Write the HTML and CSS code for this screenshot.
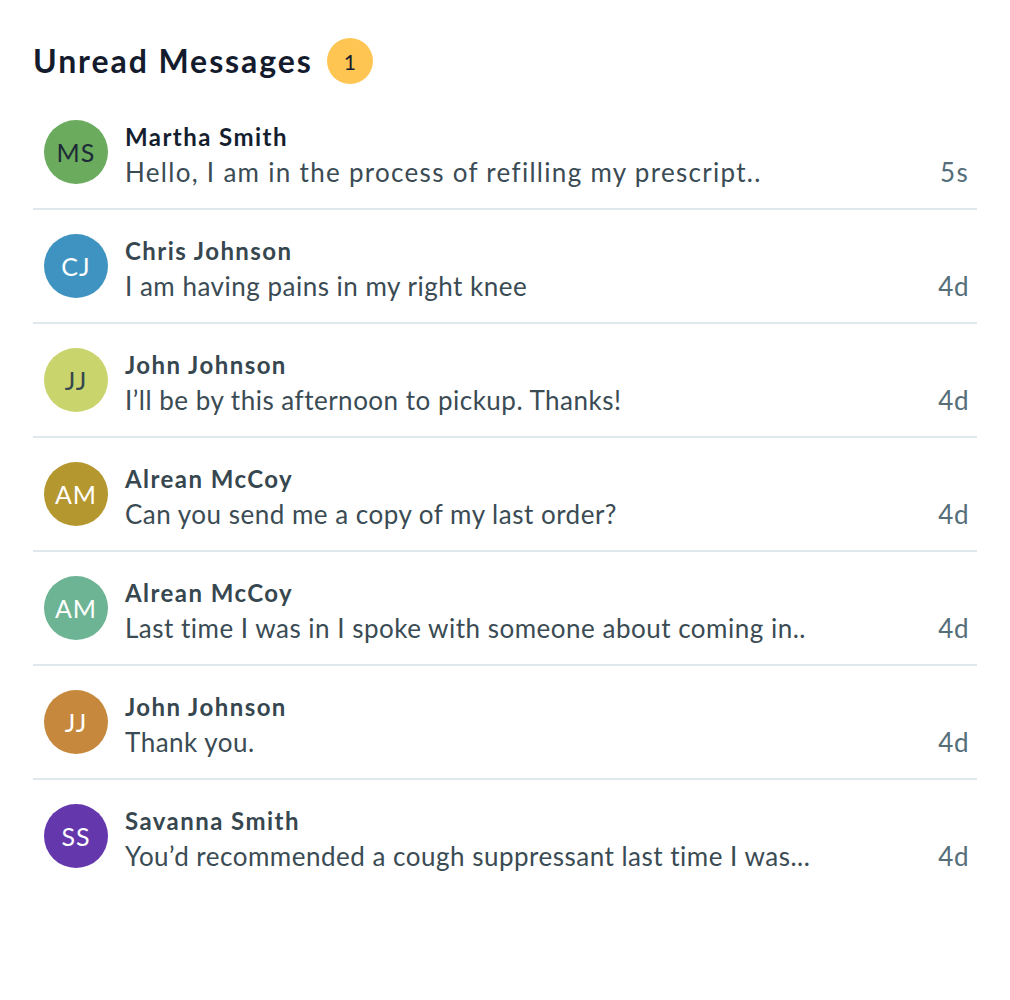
FILE: index.html
```html
<!DOCTYPE html>
<html>
<head>
<meta charset="utf-8">
<link rel="stylesheet" href="styles.css">
</head>
<body>
<div class="panel">
  <div class="header">
    <h1 class="title">Unread Messages</h1>
    <span class="badge">1</span>
  </div>
  <ul class="list">
    <li class="row unread">
      <div class="avatar av-green dark-text">MS</div>
      <div class="body">
        <div class="name">Martha Smith</div>
        <div class="line"><span class="msg">Hello, I am in the process of refilling my prescript..</span><span class="time">5s</span></div>
      </div>
    </li>
    <li class="row">
      <div class="avatar av-blue">CJ</div>
      <div class="body">
        <div class="name">Chris Johnson</div>
        <div class="line"><span class="msg">I am having pains in my right knee</span><span class="time">4d</span></div>
      </div>
    </li>
    <li class="row">
      <div class="avatar av-lime">JJ</div>
      <div class="body">
        <div class="name">John Johnson</div>
        <div class="line"><span class="msg">I’ll be by this afternoon to pickup. Thanks!</span><span class="time">4d</span></div>
      </div>
    </li>
    <li class="row">
      <div class="avatar av-olive">AM</div>
      <div class="body">
        <div class="name">Alrean McCoy</div>
        <div class="line"><span class="msg">Can you send me a copy of my last order?</span><span class="time">4d</span></div>
      </div>
    </li>
    <li class="row">
      <div class="avatar av-teal">AM</div>
      <div class="body">
        <div class="name">Alrean McCoy</div>
        <div class="line"><span class="msg">Last time I was in I spoke with someone about coming in..</span><span class="time">4d</span></div>
      </div>
    </li>
    <li class="row">
      <div class="avatar av-orange">JJ</div>
      <div class="body">
        <div class="name">John Johnson</div>
        <div class="line"><span class="msg">Thank you.</span><span class="time">4d</span></div>
      </div>
    </li>
    <li class="row last">
      <div class="avatar av-purple">SS</div>
      <div class="body">
        <div class="name">Savanna Smith</div>
        <div class="line"><span class="msg">You’d recommended a cough suppressant last time I was...</span><span class="time">4d</span></div>
      </div>
    </li>
  </ul>
</div>
</body>
</html>
```
FILE: styles.css
```css
html, body {
  margin: 0;
  padding: 0;
  background: #ffffff;
}
body {
  font-family: Lato, "Open Sans", "Liberation Sans", sans-serif;
}
.panel {
  padding: 38px 33px 0 33px;
}
.header {
  display: flex;
  align-items: center;
  height: 46px;
  gap: 14px;
}
.title {
  margin: 0;
  font-size: 32px;
  font-weight: 700;
  letter-spacing: 0.06em;
  color: #141b2d;
  line-height: 46px;
}
.badge {
  width: 46px;
  height: 46px;
  border-radius: 50%;
  background: #fec552;
  color: #141b2d;
  font-size: 21px;
  display: flex;
  align-items: center;
  justify-content: center;
}
.list {
  list-style: none;
  margin: 12px 0 0 0;
  padding: 0;
}
.row {
  display: flex;
  align-items: flex-start;
  gap: 17px;
  padding: 24px 8px 24px 11px;
  border-bottom: 2px solid #dfe8ec;
}
.row.last {
  border-bottom: none;
}
.avatar {
  flex: none;
  width: 64px;
  height: 64px;
  border-radius: 50%;
  display: flex;
  align-items: center;
  justify-content: center;
  color: #ffffff;
  font-size: 25px;
  font-weight: 400;
  letter-spacing: 1px;
}
.dark-text { color: #1d2a38; }
.av-green { background: #6aab5d; }
.av-blue { background: #3f93c0; }
.av-lime { background: #c9d46d; color: #34474f; }
.av-olive { background: #b5972f; }
.av-teal { background: #6db494; }
.av-orange { background: #c6883c; }
.av-purple { background: #6437ac; }
.body {
  flex: 1;
  min-width: 0;
  height: 64px;
  padding-top: 3px;
  box-sizing: border-box;
}
.name {
  font-size: 24px;
  line-height: 28px;
  font-weight: 700;
  letter-spacing: 0.06em;
  color: #37474f;
}
.unread .name {
  color: #151e2e;
}
.line {
  display: flex;
  justify-content: space-between;
  align-items: baseline;
  margin-top: 9px;
  font-size: 26px;
  line-height: 24px;
  letter-spacing: 0.5px;
}
.unread .line {
  letter-spacing: 1.3px;
}
.msg {
  color: #3a4b54;
  white-space: nowrap;
}
.time {
  color: #546e7a;
}
```
